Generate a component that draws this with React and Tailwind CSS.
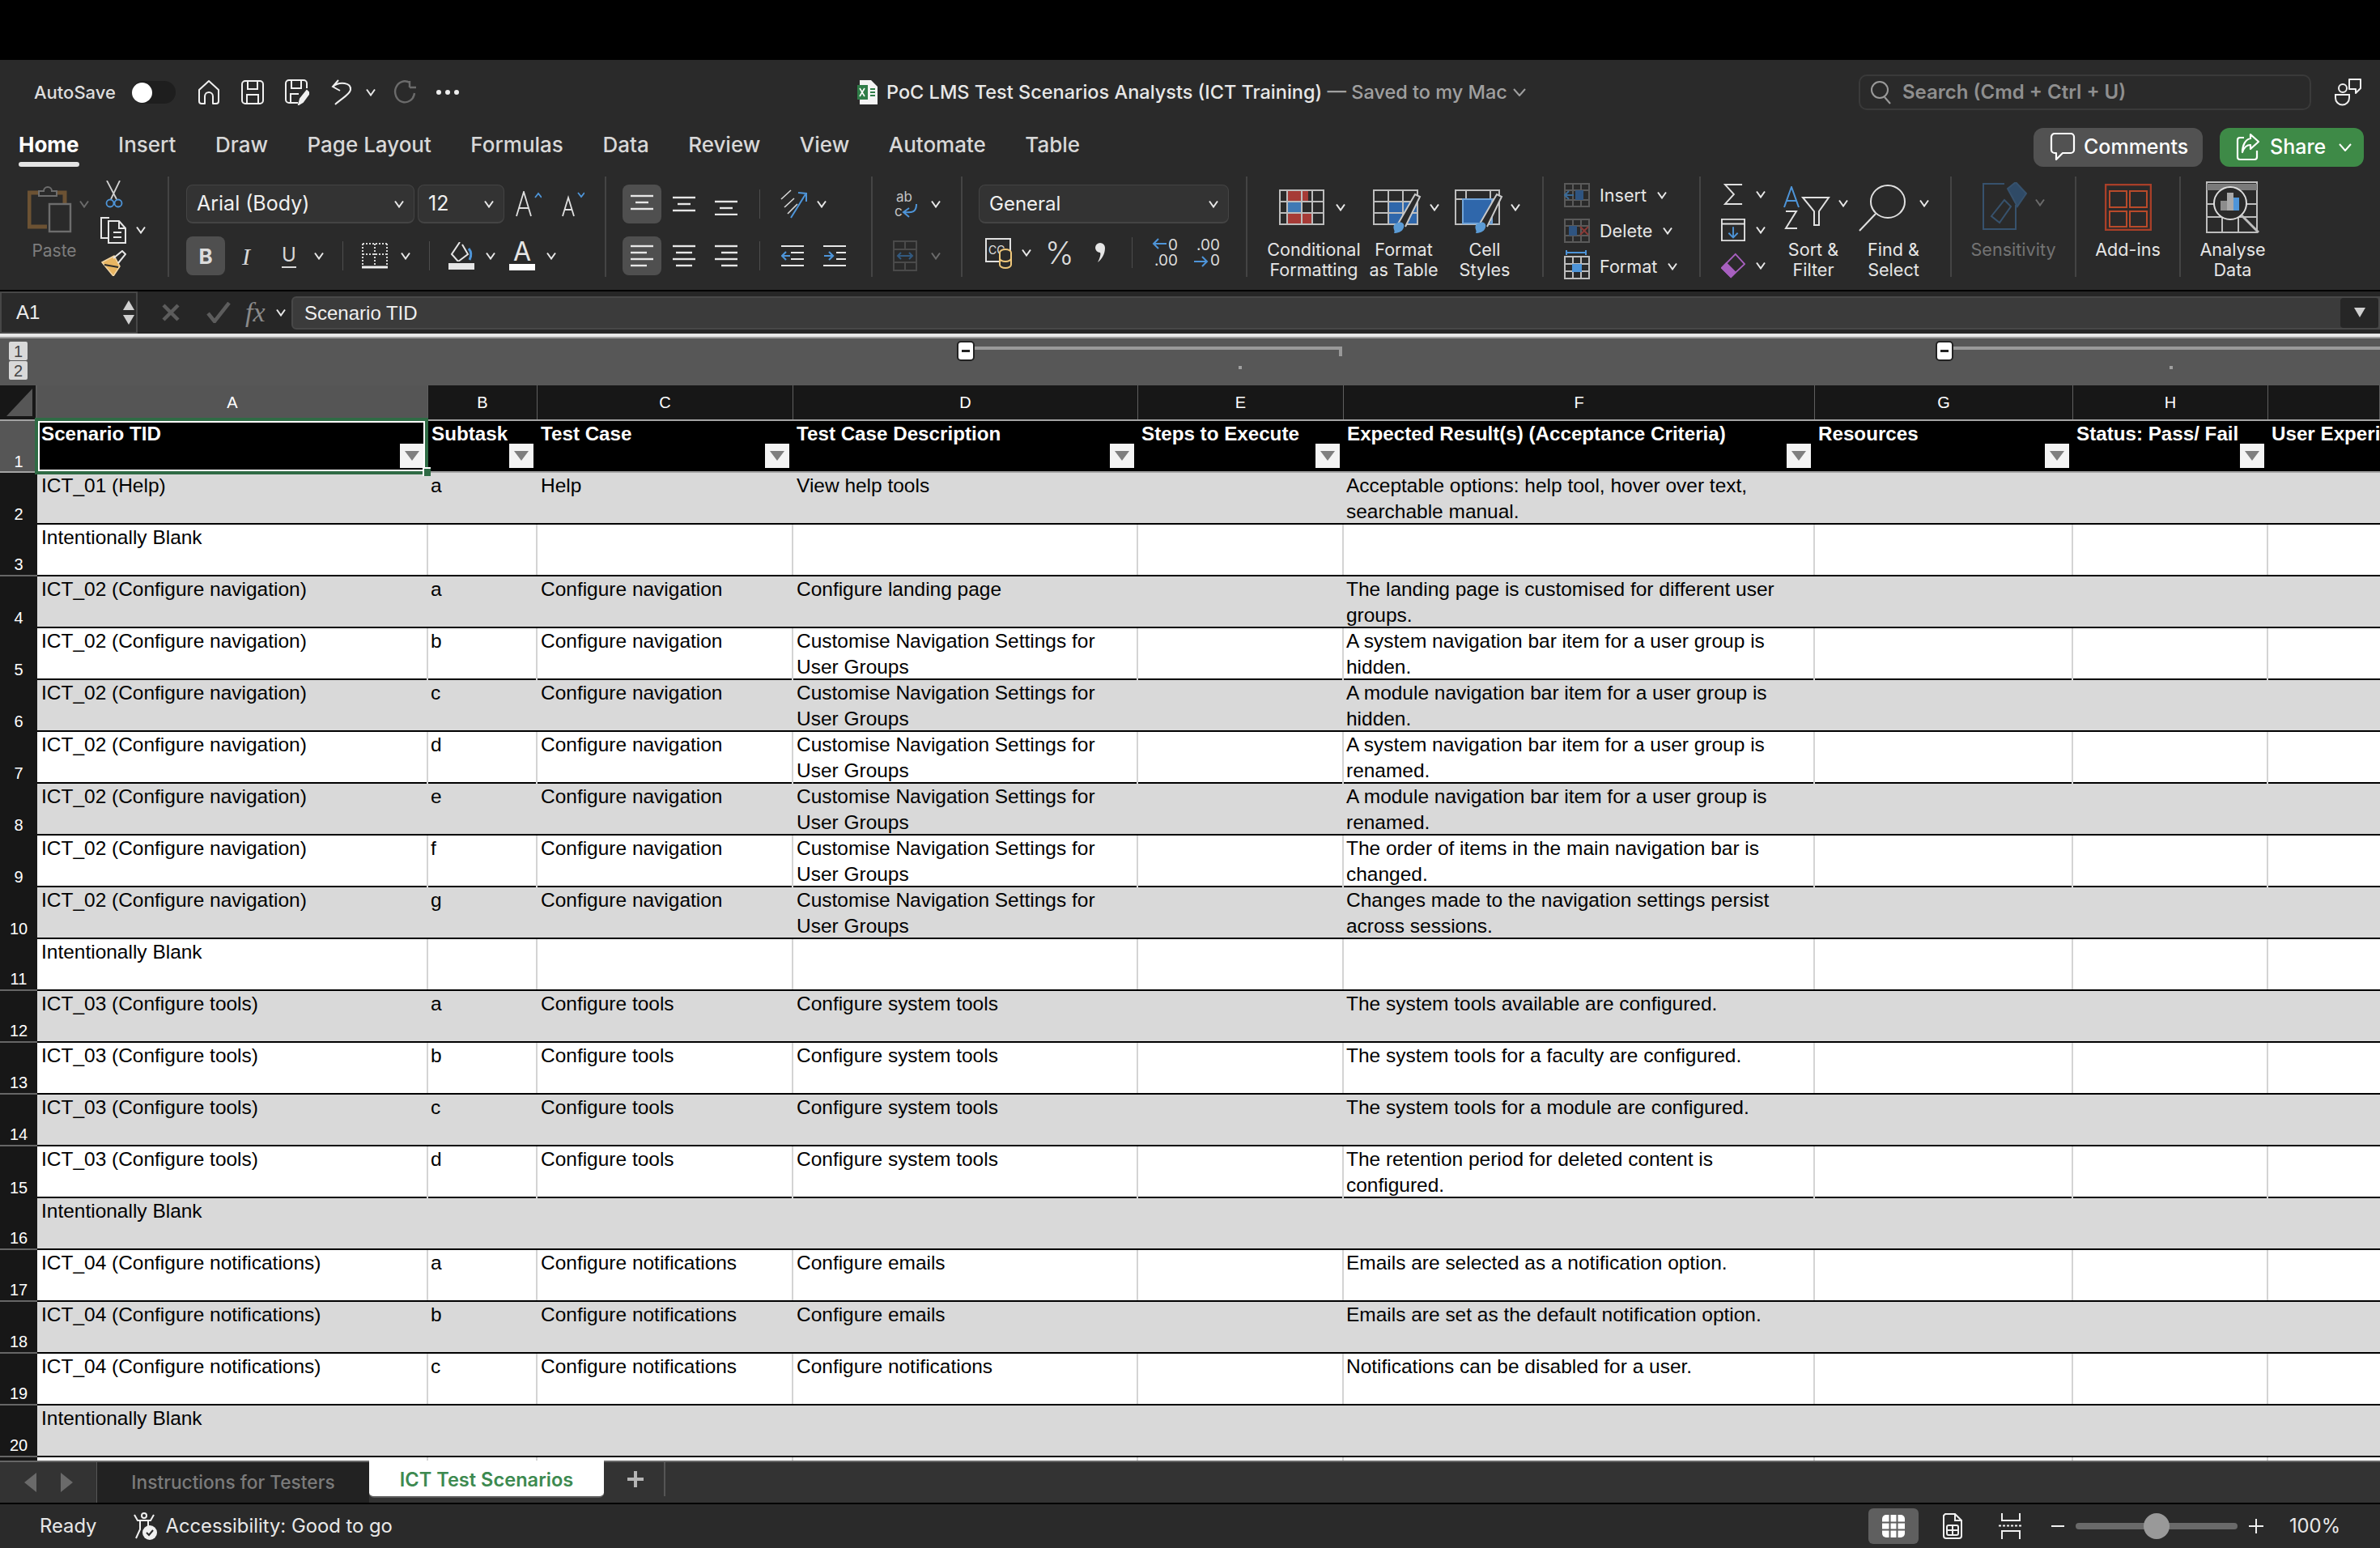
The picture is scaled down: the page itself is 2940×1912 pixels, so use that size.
const UI = "font-['Inter','Noto_Sans',sans-serif]";
const CELL = "font-['Liberation_Sans','Arial',sans-serif]";
const COLS = "grid grid-cols-[46px_483px_135px_316px_426px_254px_582px_319px_241px_138px]";

const NAV = "Customise Navigation Settings for\nUser Groups";

const rows = [
  { n: 2, a: "ICT_01 (Help)", b: "a", c: "Help", d: "View help tools", f: "Acceptable options: help tool, hover over text,\nsearchable manual." },
  { n: 3, a: "Intentionally Blank" },
  { n: 4, a: "ICT_02 (Configure navigation)", b: "a", c: "Configure navigation", d: "Configure landing page", f: "The landing page is customised for different user\ngroups." },
  { n: 5, a: "ICT_02 (Configure navigation)", b: "b", c: "Configure navigation", d: NAV, f: "A system navigation bar item for a user group is\nhidden." },
  { n: 6, a: "ICT_02 (Configure navigation)", b: "c", c: "Configure navigation", d: NAV, f: "A module navigation bar item for a user group is\nhidden." },
  { n: 7, a: "ICT_02 (Configure navigation)", b: "d", c: "Configure navigation", d: NAV, f: "A system navigation bar item for a user group is\nrenamed." },
  { n: 8, a: "ICT_02 (Configure navigation)", b: "e", c: "Configure navigation", d: NAV, f: "A module navigation bar item for a user group is\nrenamed." },
  { n: 9, a: "ICT_02 (Configure navigation)", b: "f", c: "Configure navigation", d: NAV, f: "The order of items in the main navigation bar is\nchanged." },
  { n: 10, a: "ICT_02 (Configure navigation)", b: "g", c: "Configure navigation", d: NAV, f: "Changes made to the navigation settings persist\nacross sessions." },
  { n: 11, a: "Intentionally Blank" },
  { n: 12, a: "ICT_03 (Configure tools)", b: "a", c: "Configure tools", d: "Configure system tools", f: "The system tools available are configured." },
  { n: 13, a: "ICT_03 (Configure tools)", b: "b", c: "Configure tools", d: "Configure system tools", f: "The system tools for a faculty are configured." },
  { n: 14, a: "ICT_03 (Configure tools)", b: "c", c: "Configure tools", d: "Configure system tools", f: "The system tools for a module are configured." },
  { n: 15, a: "ICT_03 (Configure tools)", b: "d", c: "Configure tools", d: "Configure system tools", f: "The retention period for deleted content is\nconfigured." },
  { n: 16, a: "Intentionally Blank" },
  { n: 17, a: "ICT_04 (Configure notifications)", b: "a", c: "Configure notifications", d: "Configure emails", f: "Emails are selected as a notification option." },
  { n: 18, a: "ICT_04 (Configure notifications)", b: "b", c: "Configure notifications", d: "Configure emails", f: "Emails are set as the default notification option." },
  { n: 19, a: "ICT_04 (Configure notifications)", b: "c", c: "Configure notifications", d: "Configure notifications", f: "Notifications can be disabled for a user." },
  { n: 20, a: "Intentionally Blank" },
  { n: 21, a: "" },
];

const headers = [
  ["A", "Scenario TID"],
  ["B", "Subtask"],
  ["C", "Test Case"],
  ["D", "Test Case Description"],
  ["E", "Steps to Execute"],
  ["F", "Expected Result(s) (Acceptance Criteria)"],
  ["G", "Resources"],
  ["H", "Status: Pass/ Fail"],
  ["", "User Experience"],
];

function Chev({ dim, className = "" }) {
  return (
    <svg viewBox="0 0 12 10" className={`w-[12px] h-[10px] shrink-0 ${className}`} fill="none" stroke={dim ? "#6b6b6b" : "#e8e8e8"} strokeWidth="2">
      <path d="M1 1.5 L6 8.5 L11 1.5" />
    </svg>
  );
}

function Sep({ className = "" }) {
  return <div className={`w-[1px] h-[36px] bg-[#4d4d4d] shrink-0 ${className}`} />;
}

function Group({ className = "", children }) {
  return <div className={`h-[124px] shrink-0 border-r-2 border-[#444444] ${className}`}>{children}</div>;
}

function Lines({ tops, widths, x = [0, 0, 0, 0] }) {
  return (
    <svg viewBox="0 0 28 28" className="w-[28px] h-[28px]" stroke="#e6e6e6" strokeWidth="2.4">
      {tops.map((t, i) => (
        <path key={i} d={`M${x[i]} ${t} h${widths[i]}`} />
      ))}
    </svg>
  );
}

function AlignBtn({ active, children, className = "" }) {
  return (
    <div className={`w-[48px] h-[48px] rounded-[8px] flex items-center justify-center shrink-0 ${active ? "bg-[#4f4f4f]" : ""} ${className}`}>
      {children}
    </div>
  );
}

function BigLabel({ children, dim, className = "" }) {
  return (
    <div className={`text-[21.6px] leading-[25px] text-center whitespace-pre ${dim ? "text-[#737373]" : "text-[#e6e6e6]"} ${className}`}>
      {children}
    </div>
  );
}

function FilterBtn() {
  return (
    <div className="absolute right-[5px] bottom-[4px] w-[30px] h-[30px] bg-[#f4f4f4] flex items-center justify-center">
      <svg viewBox="0 0 18 12" className="w-[18px] h-[12px]">
        <path d="M0 0 H18 L9 12 Z" fill="#7f7f7f" />
      </svg>
    </div>
  );
}

function TitleBar() {
  return (
    <div className="h-[80px] flex items-center shrink-0">
      <div className="w-[1059px] pl-[42px] flex items-center shrink-0">
        <span className="w-[121px] text-[22px] font-medium text-[#dedede]">AutoSave</span>
        <div className="w-[54px] h-[28px] rounded-full bg-[#1e1e1e] flex items-center">
          <div className="w-[25px] h-[25px] rounded-full bg-white" />
        </div>
        <svg viewBox="0 0 28 32" className="ml-[27px] w-[28px] h-[32px]" fill="none" stroke="#f0f0f0" strokeWidth="2" strokeLinejoin="round">
          <path d="M14 2 L26 13 V27 a3 3 0 0 1 -3 3 H19 V21 a5 5 0 0 0 -10 0 V30 H5 a3 3 0 0 1 -3 -3 V13 Z" />
        </svg>
        <svg viewBox="0 0 28 30" className="ml-[26px] w-[28px] h-[30px]" fill="none" stroke="#f0f0f0" strokeWidth="2">
          <rect x="1" y="1" width="26" height="28" rx="4" />
          <path d="M8 1 V11 H20 V1 M7 29 V18 H21 V29" />
        </svg>
        <svg viewBox="0 0 30 32" className="ml-[26px] w-[30px] h-[32px]" fill="none" stroke="#f0f0f0" strokeWidth="2">
          <path d="M16 29 H5 a4 4 0 0 1 -4 -4 V5 a4 4 0 0 1 4 -4 H23 a4 4 0 0 1 4 4 V11" />
          <path d="M8 1 V11 H20 V1 M7 29 V18 H17" />
          <path d="M17 31 L19 24 L27 14 L30 17 L22 28 Z" fill="#f0f0f0" />
        </svg>
        <svg viewBox="0 0 28 32" className="ml-[26px] w-[28px] h-[32px]" fill="none" stroke="#f0f0f0" strokeWidth="2">
          <path d="M10 1 L3 9 L12 14 M3 9 C12 2 26 4 25 13 C24 19 12 25 6 31" />
        </svg>
        <Chev className="ml-[16px]" />
        <svg viewBox="0 0 28 30" className="ml-[22px] w-[28px] h-[30px]" fill="none" stroke="#6b6b6b" strokeWidth="2.4">
          <path d="M20 3 A 12 13 0 1 0 26 16 M20 1 V9 M20 9 H28" />
        </svg>
        <div className="ml-[25px] flex gap-[5px]">
          <div className="w-[6px] h-[6px] rounded-full bg-[#eeeeee]" />
          <div className="w-[6px] h-[6px] rounded-full bg-[#eeeeee]" />
          <div className="w-[6px] h-[6px] rounded-full bg-[#eeeeee]" />
        </div>
      </div>
      <div className="w-[1237px] flex items-center shrink-0">
        <svg viewBox="0 0 26 30" className="w-[26px] h-[30px] shrink-0">
          <path d="M3 0 H17 L25 8 V30 H3 Z" fill="#f4f4f4" />
          <rect x="0" y="6" width="13" height="18" fill="#2f7d48" />
          <path d="M3 10 L9 20 M9 10 L3 20" stroke="#fff" strokeWidth="1.6" />
          <path d="M16 11 h6 M16 15 h6 M16 19 h6" stroke="#2f7d48" strokeWidth="2" />
        </svg>
        <span className="ml-[10px] text-[23.5px] font-medium text-[#e8e8e8] whitespace-pre">PoC LMS Test Scenarios Analysts (ICT Training)</span>
        <span className="text-[23.5px] font-medium text-[#a0a0a0] whitespace-pre"> — Saved to my Mac</span>
        <svg viewBox="0 0 16 10" className="ml-[7px] w-[16px] h-[10px]" fill="none" stroke="#a0a0a0" strokeWidth="2">
          <path d="M1 1 L8 9 L15 1" />
        </svg>
      </div>
      <div className="w-[559px] h-[44px] rounded-[10px] border-2 border-[#3a3a3a] flex items-center pl-[12px] shrink-0">
        <svg viewBox="0 0 26 30" className="w-[26px] h-[30px]" fill="none" stroke="#9a9a9a" strokeWidth="2">
          <circle cx="12" cy="12" r="10" />
          <path d="M18 21 L25 29" />
        </svg>
        <span className="ml-[14px] text-[24px] font-semibold text-[#8f8f8f]">Search (Cmd + Ctrl + U)</span>
      </div>
      <svg viewBox="0 0 34 34" className="ml-[29px] w-[34px] h-[34px]" fill="none" stroke="#f0f0f0" strokeWidth="2">
        <path d="M18 1 H32 V12 L26 18 V13 H18 Z" strokeLinejoin="round" />
        <circle cx="10" cy="12" r="5" />
        <path d="M1 20 H18 V24 A 8.5 8.5 0 0 1 1 24 Z" />
      </svg>
    </div>
  );
}

function TabsRow() {
  const tabs = ["Insert", "Draw", "Page Layout", "Formulas", "Data", "Review", "View", "Automate", "Table"];
  return (
    <div className="h-[64px] flex items-start shrink-0 pl-[23px] pr-[20px]">
      <div className="flex gap-[48.5px] text-[26px] leading-[48px] text-[#d8d8d8] font-medium pt-[1px]">
        <div className="relative font-bold text-white">
          Home
          <div className="absolute left-0 right-0 top-[45px] h-[6px] rounded-full bg-[#e4e4e4]" />
        </div>
        {tabs.map((t) => (
          <div key={t}>{t}</div>
        ))}
      </div>
      <div className="ml-auto flex gap-[21px] mt-[4px]">
        <div className="w-[209px] h-[48px] rounded-[12px] bg-[#525252] flex items-center pl-[20px] gap-[10px] text-[25px] font-medium text-white">
          <svg viewBox="0 0 32 38" className="w-[32px] h-[38px]" fill="none" stroke="#fff" strokeWidth="2.2">
            <path d="M6 2 H26 a4 4 0 0 1 4 4 V22 a4 4 0 0 1 -4 4 H16 L8 34 V26 H6 a4 4 0 0 1 -4 -4 V6 a4 4 0 0 1 4 -4 Z" strokeLinejoin="round" />
          </svg>
          Comments
        </div>
        <div className="w-[178px] h-[48px] rounded-[12px] bg-[#3e8a47] flex items-center pl-[20px] text-[25px] font-medium text-white">
          <svg viewBox="0 0 30 36" className="w-[30px] h-[36px]" fill="none" stroke="#fff" strokeWidth="2.2" strokeLinejoin="round">
            <path d="M10 6 H5 a3 3 0 0 0 -3 3 V30 a3 3 0 0 0 3 3 H23 a3 3 0 0 0 3 -3 V22" />
            <path d="M18 2 L28 11 L18 20 V15 C13 15 10 18 8 24 C8 15 12 8 18 7 Z" />
          </svg>
          <span className="ml-[12px]">Share</span>
          <svg viewBox="0 0 16 10" className="ml-[16px] w-[16px] h-[10px]" fill="none" stroke="#fff" strokeWidth="2">
            <path d="M1 1 L8 9 L15 1" />
          </svg>
        </div>
      </div>
    </div>
  );
}

function Ribbon() {
  return (
    <div className="h-[140px] flex items-start shrink-0">
      {/* clipboard */}
      <Group className="w-[209px] flex">
        <div className="ml-[34px] mt-[10px] w-[62px] flex flex-col items-center">
          <svg viewBox="0 0 56 60" className="w-[56px] h-[60px] self-start" fill="none">
            <path d="M13 10 H2 V52 H24 M36 10 H46 V24" stroke="#6c5233" strokeWidth="5" />
            <path d="M14 14 V8 H20 A 5 5 0 0 1 30 8 H36 V14 Z" stroke="#6d6d6d" strokeWidth="2" />
            <rect x="27" y="24" width="26" height="34" stroke="#6d6d6d" strokeWidth="2.4" />
          </svg>
          <div className="text-[21px] text-[#7d7d7d] mt-[6px] ml-[4px]">Paste</div>
        </div>
        <Chev dim className="mt-[29px] ml-[2px]" />
        <div className="ml-[14px] mt-[5px] flex flex-col gap-[10px]">
          <svg viewBox="0 0 22 34" className="w-[22px] h-[34px] ml-[6px]" fill="none" strokeWidth="1.8">
            <path d="M2 0 L14 23 M18 0 L7 23" stroke="#d0d0d0" />
            <circle cx="6" cy="28" r="4.5" stroke="#4e95d9" />
            <circle cx="16" cy="28" r="4.5" stroke="#4e95d9" />
          </svg>
          <div className="flex items-center">
            <svg viewBox="0 0 32 34" className="w-[32px] h-[34px]" fill="none" stroke="#e6e6e6" strokeWidth="2">
              <path d="M11 2 H1 V27 H9" />
              <path d="M10 6 H23 L31 15 V33 H10 Z M23 6 V15 H31 M16 20 H26 M16 26 H26" />
            </svg>
            <Chev className="ml-[12px]" />
          </div>
          <svg viewBox="0 0 32 32" className="w-[32px] h-[32px] -mt-[2px]" fill="none">
            <path d="M2 15 L17 7 L24 20 L16 32 Z" fill="#e8b562" stroke="#f2d6a6" strokeWidth="1.5" />
            <path d="M16 10 L27 1 L31 5 L22 16" stroke="#e6e6e6" strokeWidth="2" />
            <path d="M5 18 L22 21" stroke="#2a2a2a" strokeWidth="2" />
          </svg>
        </div>
      </Group>

      {/* font */}
      <Group className="w-[540px] pl-[21px] pt-[10px] flex flex-col gap-[16px]">
        <div className="flex items-center">
          <div className="w-[282px] h-[48px] rounded-[8px] bg-[#333333] border border-[#444444] border-b-2 flex items-center justify-between px-[12px] text-[25px] text-[#f0f0f0]">
            Arial (Body)
            <Chev />
          </div>
          <div className="ml-[4px] w-[107px] h-[48px] rounded-[8px] bg-[#333333] border border-[#444444] border-b-2 flex items-center justify-between px-[12px] text-[25px] text-[#f0f0f0]">
            12
            <Chev />
          </div>
          <svg viewBox="0 0 32 32" className="ml-[14px] w-[32px] h-[32px]" fill="none" stroke="#e0e0e0" strokeWidth="1.8">
            <path d="M1 31 L10 1 L19 31 M4 21 H16" />
            <path d="M24 8 L28 3 L32 8" stroke="#4e95d9" />
          </svg>
          <svg viewBox="0 0 28 32" className="ml-[25px] w-[28px] h-[32px]" fill="none" stroke="#e0e0e0" strokeWidth="1.8">
            <path d="M1 31 L8 8 L15 31 M3.5 23 H12.5" />
            <path d="M20 2 L24 7 L28 2" stroke="#4e95d9" />
          </svg>
        </div>
        <div className="flex items-center">
          <div className="w-[48px] h-[48px] rounded-[8px] bg-[#4f4f4f] flex items-center justify-center text-[26px] font-bold text-[#dcdcdc]">B</div>
          <span className="ml-[21px] w-[16px] font-['Liberation_Serif',serif] italic text-[30px] text-[#d8d8d8]">I</span>
          <div className="ml-[33px] flex flex-col items-center w-[18px] text-[24px] leading-[26px] text-[#d8d8d8]">
            U
            <div className="w-[18px] h-[2px] bg-[#d8d8d8] mt-[1px]" />
          </div>
          <Chev className="ml-[22px]" />
          <Sep className="ml-[23px]" />
          <svg viewBox="0 0 32 32" className="ml-[23px] w-[32px] h-[32px]" fill="none" stroke="#d8d8d8" strokeWidth="2" strokeDasharray="2 2">
            <path d="M1 1 H31 M1 1 V27 M31 1 V27 M16 1 V27 M1 14 H31" />
            <path d="M0 30 H32" strokeWidth="3" strokeDasharray="none" stroke="#f0f0f0" />
          </svg>
          <Chev className="ml-[16px]" />
          <Sep className="ml-[23px]" />
          <div className="ml-[23px] w-[32px] flex flex-col items-center">
            <svg viewBox="0 0 32 24" className="w-[32px] h-[24px]" fill="none" stroke="#e6e6e6" strokeWidth="2">
              <path d="M14 0 L4 15 L12 24 L24 15 L17 3" />
              <path d="M25 8 C30 14 27 20 26 22" stroke="#4e95d9" strokeWidth="3" />
            </svg>
            <div className="w-[32px] h-[8px] bg-[#e6e6e6] mt-[2px]" />
          </div>
          <Chev className="ml-[14px]" />
          <div className="ml-[17px] w-[32px] flex flex-col items-center">
            <div className="text-[32px] leading-[26px] text-[#e6e6e6]">A</div>
            <div className="w-[32px] h-[8px] bg-white mt-[2px]" />
          </div>
          <Chev className="ml-[14px]" />
        </div>
      </Group>

      {/* alignment */}
      <Group className="w-[329px] pl-[20px] pt-[10px] flex flex-col gap-[16px]">
        <div className="flex items-center">
          <AlignBtn active><Lines tops={[4, 12, 20]} widths={[28, 16, 28]} x={[0, 6, 0]} /></AlignBtn>
          <AlignBtn className="ml-[4px] mr-[4px]"><Lines tops={[6, 14, 22]} widths={[28, 16, 28]} x={[0, 6, 0]} /></AlignBtn>
          <AlignBtn><Lines tops={[11, 19, 27]} widths={[28, 16, 28]} x={[0, 6, 0]} /></AlignBtn>
          <Sep className="ml-[17px]" />
          <svg viewBox="0 0 34 36" className="ml-[24px] w-[34px] h-[36px]" fill="none" strokeWidth="2">
            <path d="M2 12 L14 1 M6 22 L18 11 M10 30 L22 18" stroke="#d8d8d8" strokeWidth="1.6" />
            <path d="M14 35 L32 6 M23 4 L33 5 L33 15" stroke="#4e95d9" />
          </svg>
          <Chev className="ml-[12px]" />
        </div>
        <div className="flex items-center">
          <AlignBtn active><Lines tops={[2, 10, 18, 26]} widths={[28, 20, 28, 20]} /></AlignBtn>
          <AlignBtn className="ml-[4px] mr-[4px]"><Lines tops={[2, 10, 18, 26]} widths={[28, 20, 28, 20]} x={[0, 4, 0, 4]} /></AlignBtn>
          <AlignBtn><Lines tops={[2, 10, 18, 26]} widths={[28, 20, 28, 20]} x={[0, 8, 0, 8]} /></AlignBtn>
          <Sep className="ml-[17px]" />
          <svg viewBox="0 0 28 28" className="ml-[26px] w-[28px] h-[28px]" fill="none" stroke="#e6e6e6" strokeWidth="2.2">
            <path d="M0 2 H28 M12 10 H28 M12 18 H28 M0 26 H28" />
            <path d="M11 14 H1 M6 9 L1 14 L6 19" stroke="#4e95d9" />
          </svg>
          <svg viewBox="0 0 28 28" className="ml-[24px] w-[28px] h-[28px]" fill="none" stroke="#e6e6e6" strokeWidth="2.2">
            <path d="M0 2 H28 M16 10 H28 M16 18 H28 M0 26 H28" />
            <path d="M1 14 H12 M7 9 L12 14 L7 19" stroke="#4e95d9" />
          </svg>
        </div>
      </Group>

      {/* wrap */}
      <Group className="w-[111px] pl-[25px] pt-[10px] flex flex-col gap-[16px]">
        <div className="h-[48px] flex items-center">
          <svg viewBox="0 0 30 36" className="w-[30px] h-[36px] ml-[2px]" fill="none">
            <text x="2" y="15" fontSize="17" fill="#c4c4c4" fontFamily="Inter">ab</text>
            <text x="0" y="33" fontSize="17" fill="#c4c4c4" fontFamily="Inter">c</text>
            <path d="M27 18 C27 28 22 29 12 28 M18 23 L11 28 L18 34" stroke="#4e95d9" strokeWidth="2" />
          </svg>
          <Chev className="ml-[15px]" />
        </div>
        <div className="h-[48px] flex items-center">
          <svg viewBox="0 0 30 38" className="w-[30px] h-[38px]" fill="none" strokeWidth="2">
            <path d="M1 1 H29 V37 H1 Z M1 11 H29 M1 27 H29 M15 1 V11 M15 27 V37" stroke="#4a4a4a" />
            <path d="M6 19 H24 M10 15 L6 19 L10 23 M20 15 L24 19 L20 23" stroke="#32597f" />
          </svg>
          <Chev dim className="ml-[17px]" />
        </div>
      </Group>

      {/* number */}
      <Group className="w-[352px] pl-[20px] pt-[10px] flex flex-col gap-[16px]">
        <div className="w-[309px] h-[48px] rounded-[8px] bg-[#333333] border border-[#444444] border-b-2 flex items-center justify-between px-[12px] text-[24px] text-[#f0f0f0]">
          General
          <Chev />
        </div>
        <div className="flex items-center">
          <svg viewBox="0 0 34 40" className="ml-[8px] w-[34px] h-[40px]" fill="none">
            <rect x="1" y="3" width="30" height="28" stroke="#e0e0e0" strokeWidth="2" />
            <text x="4" y="22" fontSize="14" fill="#e0e0e0" fontFamily="Inter">CC</text>
            <ellipse cx="25" cy="20" rx="7" ry="4" fill="#2a2a2a" stroke="#efc77a" strokeWidth="2" />
            <path d="M18 20 V35 A 7 4 0 0 0 32 35 V20 M18 27 A 7 4 0 0 0 32 27" stroke="#efc77a" strokeWidth="2" fill="#2a2a2a" />
          </svg>
          <Chev className="ml-[11px]" />
          <span className="ml-[17px] w-[36px] text-[38px] leading-[40px] font-light text-[#dcdcdc]">%</span>
          <svg viewBox="0 0 16 24" className="ml-[24px] w-[16px] h-[24px]">
            <path d="M2 6 A 6 6 0 1 1 14 6 C14 14 10 20 5 24 C8 18 9 14 8 12 A 6 6 0 0 1 2 6 Z" fill="#e6e6e6" />
          </svg>
          <Sep className="ml-[31px] !h-[38px]" />
          <div className="ml-[24px] w-[32px] h-[38px] relative text-[19px] leading-[19px] text-[#dcdcdc] flex flex-col items-end">
            <div>0</div>
            <div>.00</div>
            <svg viewBox="0 0 18 16" className="absolute left-0 top-0 w-[18px] h-[16px]" fill="none" stroke="#4e95d9" strokeWidth="2">
              <path d="M18 8 H2 M8 2 L2 8 L8 14" />
            </svg>
          </div>
          <div className="ml-[20px] w-[32px] h-[38px] relative text-[19px] leading-[19px] text-[#dcdcdc] flex flex-col items-end">
            <div>.00</div>
            <div>0</div>
            <svg viewBox="0 0 18 16" className="absolute left-0 bottom-0 w-[18px] h-[16px]" fill="none" stroke="#4e95d9" strokeWidth="2">
              <path d="M0 8 H16 M10 2 L16 8 L10 14" />
            </svg>
          </div>
        </div>
      </Group>

      {/* styles */}
      <Group className="w-[366px] flex">
        <div className="ml-[23px] w-[118px] shrink-0 flex flex-col items-center">
          <div className="h-[72px] shrink-0 pt-[16px] flex items-start -ml-[30px]">
            <svg viewBox="0 0 56 44" className="w-[56px] h-[44px]" fill="none">
              <rect x="10" y="2" width="26" height="14" fill="#a63b37" />
              <rect x="10" y="16" width="18" height="13" fill="#3f79b5" />
              <rect x="10" y="29" width="30" height="13" fill="#a63b37" />
              <path d="M1 1 H55 V43 H1 Z M1 15 H55 M1 29 H55 M10 1 V43 M28 1 V43 M41 1 V43" stroke="#bdbdbd" strokeWidth="2" />
            </svg>
            <Chev className="ml-[14px] mt-[17px] -mr-[26px]" />
          </div>
          <BigLabel className="mt-[6px]">{"Conditional\nFormatting"}</BigLabel>
        </div>
        <div className="ml-[14px] w-[76px] shrink-0 flex flex-col items-center">
          <div className="h-[72px] shrink-0 pt-[16px] flex items-start -ml-[16px]">
            <svg viewBox="0 0 60 56" className="w-[60px] h-[56px]" fill="none">
              <rect x="18" y="14" width="38" height="30" fill="#2f67ab" />
              <path d="M1 1 H55 V43 H1 Z M1 15 H55 M1 29 H55 M19 1 V43 M37 1 V43" stroke="#bdbdbd" strokeWidth="2" />
              <path d="M30 44 L52 6 L58 9 L40 46" fill="#2a2a2a" stroke="#c9c9c9" strokeWidth="2" />
              <path d="M26 44 C32 38 40 40 38 47 C36 53 30 54 26 54 C28 50 24 49 26 44 Z" fill="#5b9bd5" />
            </svg>
            <Chev className="ml-[10px] mt-[17px] -mr-[22px]" />
          </div>
          <BigLabel className="mt-[6px]">{"Format\nas Table"}</BigLabel>
        </div>
        <div className="ml-[24px] w-[76px] shrink-0 flex flex-col items-center">
          <div className="h-[72px] shrink-0 pt-[16px] flex items-start -ml-[14px]">
            <svg viewBox="0 0 60 56" className="w-[60px] h-[56px]" fill="none">
              <path d="M1 1 H55 V43 H1 Z M14 1 V43 M1 12 H55 M44 1 V12" stroke="#bdbdbd" strokeWidth="2" />
              <rect x="10" y="12" width="36" height="30" fill="#2f67ab" stroke="#73a5d8" strokeWidth="2" />
              <path d="M30 44 L52 6 L58 9 L40 46" fill="#2a2a2a" stroke="#c9c9c9" strokeWidth="2" />
              <path d="M26 44 C32 38 40 40 38 47 C36 53 30 54 26 54 C28 50 24 49 26 44 Z" fill="#5b9bd5" />
            </svg>
            <Chev className="ml-[9px] mt-[17px] -mr-[20px]" />
          </div>
          <BigLabel className="mt-[6px]">{"Cell\nStyles"}</BigLabel>
        </div>
      </Group>

      {/* cells */}
      <Group className="w-[194px] pl-[25px] pt-[8px] flex flex-col gap-[14px]">
        <div className="h-[30px] flex items-center text-[21.6px] text-[#e6e6e6]">
          <svg viewBox="0 0 32 30" className="w-[32px] h-[30px] shrink-0" fill="none" strokeWidth="2">
            <path d="M1 1 H31 V29 H1 Z M1 9 H31 M1 21 H31 M11 1 V29 M21 1 V29" stroke="#5a5a5a" />
            <rect x="14" y="9" width="10" height="12" fill="#2f5480" />
            <path d="M12 15 H1 M6 10 L1 15 L6 20" stroke="#3b6a96" />
          </svg>
          <span className="ml-[12px]">Insert</span>
          <Chev className="ml-[13px]" />
        </div>
        <div className="h-[30px] flex items-center text-[21.6px] text-[#e6e6e6]">
          <svg viewBox="0 0 32 30" className="w-[32px] h-[30px] shrink-0" fill="none" strokeWidth="2">
            <path d="M1 1 H31 V29 H1 Z M1 9 H31 M1 21 H31 M11 1 V29 M21 1 V29" stroke="#5a5a5a" />
            <rect x="6" y="9" width="10" height="12" fill="#2f5480" />
            <path d="M20 10 L30 20 M30 10 L20 20" stroke="#8a3a36" />
          </svg>
          <span className="ml-[12px]">Delete</span>
          <Chev className="ml-[13px]" />
        </div>
        <div className="h-[30px] flex items-center text-[21.6px] text-[#e6e6e6]">
          <svg viewBox="0 0 32 36" className="w-[32px] h-[36px] shrink-0 -mt-[4px]" fill="none" strokeWidth="2">
            <path d="M1 8 H31 V35 H1 Z M1 17 H31 M1 26 H31 M11 8 V35 M21 8 V35" stroke="#bdbdbd" />
            <rect x="10" y="17" width="12" height="10" fill="#4e95d9" />
            <path d="M3 3 H27 M3 0 V6 M27 0 V6" stroke="#4e95d9" />
          </svg>
          <span className="ml-[12px]">Format</span>
          <Chev className="ml-[13px]" />
        </div>
      </Group>

      {/* editing */}
      <Group className="w-[310px] flex">
        <div className="ml-[25px] pt-[8px] flex flex-col gap-[16px] w-[55px] shrink-0">
          <div className="h-[28px] flex items-center">
            <svg viewBox="0 0 26 30" className="ml-[3px] w-[26px] h-[30px]" fill="none" stroke="#e0e0e0" strokeWidth="2">
              <path d="M25 2 H2 L14 15 L2 28 H25" />
            </svg>
            <Chev className="ml-[16px]" />
          </div>
          <div className="h-[28px] flex items-center">
            <svg viewBox="0 0 32 30" className="w-[32px] h-[30px]" fill="none" stroke="#e0e0e0" strokeWidth="2">
              <path d="M1 1 H31 V29 H1 Z M1 7 H31" />
              <path d="M16 11 V25 M10 19 L16 25 L22 19" stroke="#4e95d9" />
            </svg>
            <Chev className="ml-[13px]" />
          </div>
          <div className="h-[28px] flex items-center">
            <svg viewBox="0 0 32 32" className="w-[32px] h-[32px]" fill="none" stroke="#a860c0" strokeWidth="2">
              <path d="M19 1 L31 14 L13 31 L1 19 Z" />
              <path d="M7 13 L19 25 L13 31 L1 19 Z" fill="#a860c0" />
            </svg>
            <Chev className="ml-[13px]" />
          </div>
        </div>
        <div className="ml-[19px] w-[80px] shrink-0 flex flex-col items-center">
          <div className="h-[72px] shrink-0 pt-[12px] flex items-start -ml-[17px]">
            <svg viewBox="0 0 58 54" className="w-[58px] h-[54px]" fill="none" strokeWidth="2">
              <path d="M1 26 L10 1 L19 26 M4 18 H16" stroke="#4e95d9" />
              <path d="M3 31 H16 L3 52 H17" stroke="#e0e0e0" />
              <path d="M24 14 H56 L44 31 V48 H38 V31 Z" stroke="#e0e0e0" />
            </svg>
            <Chev className="ml-[10px] mt-[16px] -mr-[22px]" />
          </div>
          <BigLabel className="mt-[6px]">{"Sort &\nFilter"}</BigLabel>
        </div>
        <div className="ml-[19px] w-[80px] shrink-0 flex flex-col items-center">
          <div className="h-[72px] shrink-0 pt-[10px] flex items-start -ml-[28px]">
            <svg viewBox="0 0 60 58" className="w-[60px] h-[58px]" fill="none" stroke="#e0e0e0" strokeWidth="2">
              <ellipse cx="37" cy="21" rx="21" ry="20" />
              <path d="M22 36 L2 57" />
            </svg>
            <Chev className="ml-[16px] mt-[18px] -mr-[28px]" />
          </div>
          <BigLabel className="mt-[6px]">{"Find &\nSelect"}</BigLabel>
        </div>
      </Group>

      {/* sensitivity */}
      <Group className="w-[154px] flex flex-col items-center">
        <div className="h-[72px] shrink-0 pt-[7px] flex items-start">
          <svg viewBox="0 0 56 60" className="w-[56px] h-[60px]" fill="none" strokeWidth="2">
            <path d="M28 2 H2 V58 H42 V28" stroke="#37526d" />
            <path d="M32 8 L42 0 L55 14 L44 30 Z" stroke="#37526d" fill="#2f4a66" />
            <path d="M12 42 L28 22 L36 30 L22 50 Z" stroke="#37526d" />
          </svg>
          <Chev dim className="ml-[10px] mt-[20px]" />
        </div>
        <BigLabel dim className="mt-[6px]">Sensitivity</BigLabel>
      </Group>

      {/* add-ins */}
      <Group className="w-[129px] flex flex-col items-center">
        <div className="h-[72px] shrink-0 pt-[9px]">
          <svg viewBox="0 0 58 58" className="w-[58px] h-[58px]" fill="none" stroke="#b94a2a" strokeWidth="2">
            <rect x="1" y="1" width="56" height="56" stroke="#a83f28" strokeWidth="2.6" />
            <rect x="6" y="9" width="21" height="20" />
            <rect x="31" y="9" width="21" height="20" />
            <rect x="6" y="34" width="21" height="19" />
            <rect x="31" y="34" width="21" height="19" />
          </svg>
        </div>
        <BigLabel className="mt-[6px]">Add-ins</BigLabel>
      </Group>

      {/* analyse */}
      <div className="w-[128px] h-[124px] shrink-0 flex flex-col items-center">
        <div className="h-[72px] shrink-0 pt-[6px]">
          <svg viewBox="0 0 66 64" className="w-[66px] h-[64px]" fill="none" stroke="#bdbdbd" strokeWidth="2">
            <rect x="1" y="1" width="62" height="62" />
            <rect x="1" y="3" width="62" height="8" fill="#7a7a7a" stroke="none" />
            <path d="M1 28 H62 M1 44 H62 M20 44 V63 M40 44 V63" />
            <circle cx="30" cy="27" r="20" fill="#2a2a2a" stroke="#dcdcdc" />
            <rect x="18" y="24" width="8" height="12" fill="#8c8c8c" stroke="none" />
            <rect x="26" y="14" width="8" height="22" fill="#a9a9a9" stroke="none" />
            <rect x="34" y="20" width="7" height="16" fill="#4e95d9" stroke="none" />
            <path d="M44 42 L65 63" strokeWidth="3" />
          </svg>
        </div>
        <BigLabel className="mt-[6px]">{"Analyse\nData"}</BigLabel>
      </div>
    </div>
  );
}

function FormulaBar() {
  return (
    <div className="h-[52px] shrink-0 bg-[#262626] flex items-center">
      <div className="w-[170px] h-[52px] border-2 border-[#474747] flex items-center justify-between pl-[18px] pr-[2px] shrink-0 bg-[#2a2a2a]">
        <span className={`${CELL} text-[24px] text-[#eeeeee]`}>A1</span>
        <div className="flex flex-col gap-[6px]">
          <svg viewBox="0 0 14 12" className="w-[14px] h-[12px]"><path d="M7 0 L14 12 H0 Z" fill="#d0d0d0" /></svg>
          <svg viewBox="0 0 14 12" className="w-[14px] h-[12px]"><path d="M0 0 H14 L7 12 Z" fill="#d0d0d0" /></svg>
        </div>
      </div>
      <svg viewBox="0 0 22 22" className="ml-[30px] w-[22px] h-[22px] shrink-0" stroke="#5c5c5c" strokeWidth="4.5">
        <path d="M2 2 L20 20 M20 2 L2 20" />
      </svg>
      <svg viewBox="0 0 30 26" className="ml-[33px] w-[30px] h-[26px] shrink-0" fill="none" stroke="#5c5c5c" strokeWidth="4.5">
        <path d="M2 14 L10 24 L28 1" />
      </svg>
      <span className="ml-[18px] w-[32px] font-['Liberation_Serif',serif] italic text-[34px] leading-[40px] text-[#8a8a8a] shrink-0">fx</span>
      <Chev className="ml-[5px] !w-[14px]" />
      <div className="ml-[6px] flex-1 h-[41px] rounded-l-[6px] bg-[#3b3b3b] border-2 border-[#484848] flex items-center justify-between pl-[14px]">
        <span className={`${CELL} text-[24px] text-[#f0f0f0] pt-[2px]`}>Scenario TID</span>
        <div className="w-[47px] h-[37px] bg-[#262626] rounded-[4px] flex items-center justify-center">
          <svg viewBox="0 0 14 12" className="w-[14px] h-[12px]"><path d="M0 0 H14 L7 12 Z" fill="#cfcfcf" /></svg>
        </div>
      </div>
    </div>
  );
}

function OutlineBar() {
  return (
    <div className="relative h-[58px] shrink-0 bg-[#575757]">
      <div className={`${CELL} absolute left-[11px] top-[4px] flex flex-col gap-[1px] text-[20px] text-[#444444]`}>
        <div className="w-[23px] h-[23px] bg-[#d9d9d9] flex items-center justify-center rounded-[2px]">1</div>
        <div className="w-[23px] h-[23px] bg-[#d9d9d9] flex items-center justify-center rounded-[2px]">2</div>
      </div>

      <div className="absolute left-[1203px] top-[10px] w-[455px] h-[12px] border-t-4 border-r-4 border-[#999999]" />
      <div className="absolute left-[1182px] top-[3px] w-[22px] h-[25px] rounded-[5px] bg-white border-2 border-[#222222] flex items-center justify-center">
        <div className="w-[10px] h-[3px] bg-[#222222]" />
      </div>
      <div className="absolute left-[1530px] top-[34px] w-[4px] h-[4px] bg-[#a0a0a0]" />

      <div className="absolute left-[2412px] right-0 top-[10px] h-[4px] bg-[#999999]" />
      <div className="absolute left-[2391px] top-[3px] w-[22px] h-[25px] rounded-[5px] bg-white border-2 border-[#222222] flex items-center justify-center">
        <div className="w-[10px] h-[3px] bg-[#222222]" />
      </div>
      <div className="absolute left-[2680px] top-[34px] w-[4px] h-[4px] bg-[#a0a0a0]" />
    </div>
  );
}

function Sheet() {
  const colLetters = ["A", "B", "C", "D", "E", "F", "G", "H", ""];
  return (
    <div className={`${CELL} relative flex-1 overflow-hidden bg-white`}>
      {/* column headers */}
      <div className={`${COLS} h-[44px] bg-[#171717] border-b-2 border-[#a3a3a3] box-border text-[20px] text-white`}>
        <div className="bg-[#171717] flex items-end justify-end pr-[4px] pb-[4px] border-r-2 border-[#5f5f5f]">
          <svg viewBox="0 0 32 34" className="w-[32px] h-[34px]"><path d="M32 0 V34 H0 Z" fill="#565656" /></svg>
        </div>
        {colLetters.map((c, i) => (
          <div key={i} className={`flex items-center justify-center border-r border-[#5f5f5f] ${c === "A" ? "bg-[#555555]" : ""}`}>
            {c}
          </div>
        ))}
      </div>

      {/* header row */}
      <div className={`${COLS} h-[64px] bg-black border-b-2 border-[#a3a3a3] box-border`}>
        <div className="bg-[#565656] flex items-end justify-center text-[20px] leading-[24px] text-white">1</div>
        {headers.map(([col, text], i) => (
          <div key={text} className={`relative text-[24.2px] leading-[32px] font-bold text-white whitespace-pre ${i === 0 ? "pl-[5px]" : "pl-[4px]"}`}>
            {text}
            {col && <FilterBtn />}
          </div>
        ))}
      </div>

      {/* data rows */}
      {rows.map((r) => {
        const stripe = r.n % 2 === 0 && r.n !== 21;
        const line = stripe ? "" : "border-r-2 border-[#d4d4d4]";
        return (
          <div key={r.n} className={`${COLS} h-[64px] box-border border-b-2 border-black text-[24.47px] leading-[32px] text-black whitespace-pre ${stripe ? "bg-[#d9d9d9]" : "bg-white"}`}>
            <div className="bg-[#171717] -mb-[2px] border-b-2 border-[#666666] pb-[1px] flex items-end justify-center text-[20px] leading-[24px] text-white">{r.n < 21 ? r.n : ""}</div>
            <div className={`pl-[5px] ${line}`}>{r.a}</div>
            <div className={`pl-[3px] ${line}`}>{r.b}</div>
            <div className={`pl-[4px] ${line}`}>{r.c}</div>
            <div className={`pl-[4px] ${line}`}>{r.d}</div>
            <div className={`pl-[4px] ${line}`} />
            <div className={`pl-[3px] ${line}`}>{r.f}</div>
            <div className={`pl-[4px] ${line}`} />
            <div className={`pl-[4px] ${line}`} />
            <div />
          </div>
        );
      })}

      {/* selected cell */}
      <div className="absolute left-[43px] top-[40px] w-[486px] h-[70px] border-[4px] border-[#2f6b45]">
        <div className="w-full h-full border-2 border-white" />
      </div>
      <div className="absolute left-[522px] top-[101px] w-[10px] h-[11px] bg-[#2f6b45] border-t-2 border-l-2 border-white" />
    </div>
  );
}

function TabBar() {
  return (
    <div className={`h-[52px] shrink-0 bg-[#333333] border-t-2 border-[#666666] flex items-start`}>
      <div className="w-[120px] h-[50px] flex items-center pl-[30px] gap-[30px] shrink-0 border-r border-[#555555]">
        <svg viewBox="0 0 15 24" className="w-[15px] h-[24px]"><path d="M15 0 V24 L0 12 Z" fill="#6a6a6a" /></svg>
        <svg viewBox="0 0 15 24" className="w-[15px] h-[24px]"><path d="M0 0 V24 L15 12 Z" fill="#6a6a6a" /></svg>
      </div>
      <div className="w-[336px] h-[50px] bg-[#222222] flex items-center justify-center text-[22.7px] font-medium text-[#7b7b7b] shrink-0">
        Instructions for Testers
      </div>
      <div className="w-[290px] h-[46px] -mt-[2px] bg-white rounded-b-[6px] border-b-2 border-[#5c5c5c] pt-[4px] flex items-center justify-center text-[23.6px] font-semibold text-[#3d8a50] shrink-0">
        ICT Test Scenarios
      </div>
      <div className="w-[76px] h-[42px] pl-[4px] flex items-center justify-center shrink-0 border-r-2 border-[#555555]">
        <svg viewBox="0 0 20 20" className="w-[20px] h-[20px]" stroke="#b5b5b5" strokeWidth="4">
          <path d="M10 0 V20 M0 10 H20" />
        </svg>
      </div>
    </div>
  );
}

function StatusBar() {
  return (
    <div className="h-[56px] shrink-0 border-t-2 border-black bg-[#2a2a2a] flex items-center pl-[49px] pr-[49px] text-[23.8px] text-[#e8e8e8]">
      <span>Ready</span>
      <svg viewBox="0 0 30 34" className="ml-[45px] w-[30px] h-[34px]" fill="none" stroke="#f0f0f0" strokeWidth="2">
        <circle cx="13" cy="4" r="3" />
        <path d="M1 3 L5 10 H21 L25 3 M8 11 V21 L3 32 M18 11 V18" />
        <circle cx="20" cy="25" r="9" fill="#f0f0f0" stroke="none" />
        <path d="M16 25 L19 28 L24 22" stroke="#2a2a2a" />
      </svg>
      <span className="ml-[10px]">Accessibility: Good to go</span>
      <div className="ml-auto w-[62px] h-[44px] rounded-[6px] bg-[#5f5f5f] flex items-center justify-center">
        <svg viewBox="0 0 28 28" className="w-[28px] h-[28px]">
          <rect x="0" y="0" width="28" height="28" rx="5" fill="#fff" />
          <path d="M9.5 0 V28 M18.5 0 V28 M0 9.5 H28 M0 18.5 H28" stroke="#5f5f5f" strokeWidth="2" />
        </svg>
      </div>
      <svg viewBox="0 0 24 32" className="ml-[30px] w-[24px] h-[32px]" fill="none" stroke="#f0f0f0" strokeWidth="2">
        <path d="M3 1 H15 L23 9 V28 a3 3 0 0 1 -3 3 H4 a3 3 0 0 1 -3 -3 V3 Z M15 1 V9 H23" />
        <rect x="5" y="15" width="14" height="12" rx="2" />
        <path d="M5 21 H19 M12 15 V27" />
      </svg>
      <svg viewBox="0 0 30 32" className="ml-[45px] w-[30px] h-[32px]" fill="none" stroke="#f0f0f0" strokeWidth="2">
        <path d="M4 0 V9 H26 V0 M4 32 V22 H26 V32" />
        <path d="M0 15.5 H30" strokeDasharray="3 2" />
      </svg>
      <div className="ml-[35px] w-[16px] h-[2px] bg-[#f0f0f0]" />
      <div className="ml-[14px] w-[200px] h-[8px] rounded-full bg-[#6a6a6a] flex items-center pl-[84px]">
        <div className="w-[32px] h-[32px] rounded-full bg-[#999999] shrink-0" />
      </div>
      <svg viewBox="0 0 18 18" className="ml-[14px] w-[18px] h-[18px]" stroke="#f0f0f0" strokeWidth="2">
        <path d="M9 0 V18 M0 9 H18" />
      </svg>
      <span className="ml-[32px]">100%</span>
    </div>
  );
}

export default function App() {
  return (
    <div className={`${UI} w-[2940px] h-[1912px] flex flex-col overflow-hidden bg-black`}>
      <div className="h-[74px] shrink-0 bg-black" />
      <div className="bg-[#2a2a2a] h-[284px] shrink-0">
        <TitleBar />
        <TabsRow />
        <Ribbon />
      </div>
      <div className="h-[2px] shrink-0 bg-black" />
      <FormulaBar />
      <div className="h-[6px] shrink-0 bg-[#e8e8e8] border-b-2 border-[#a0a0a0]" />
      <OutlineBar />
      <Sheet />
      <TabBar />
      <StatusBar />
    </div>
  );
}
